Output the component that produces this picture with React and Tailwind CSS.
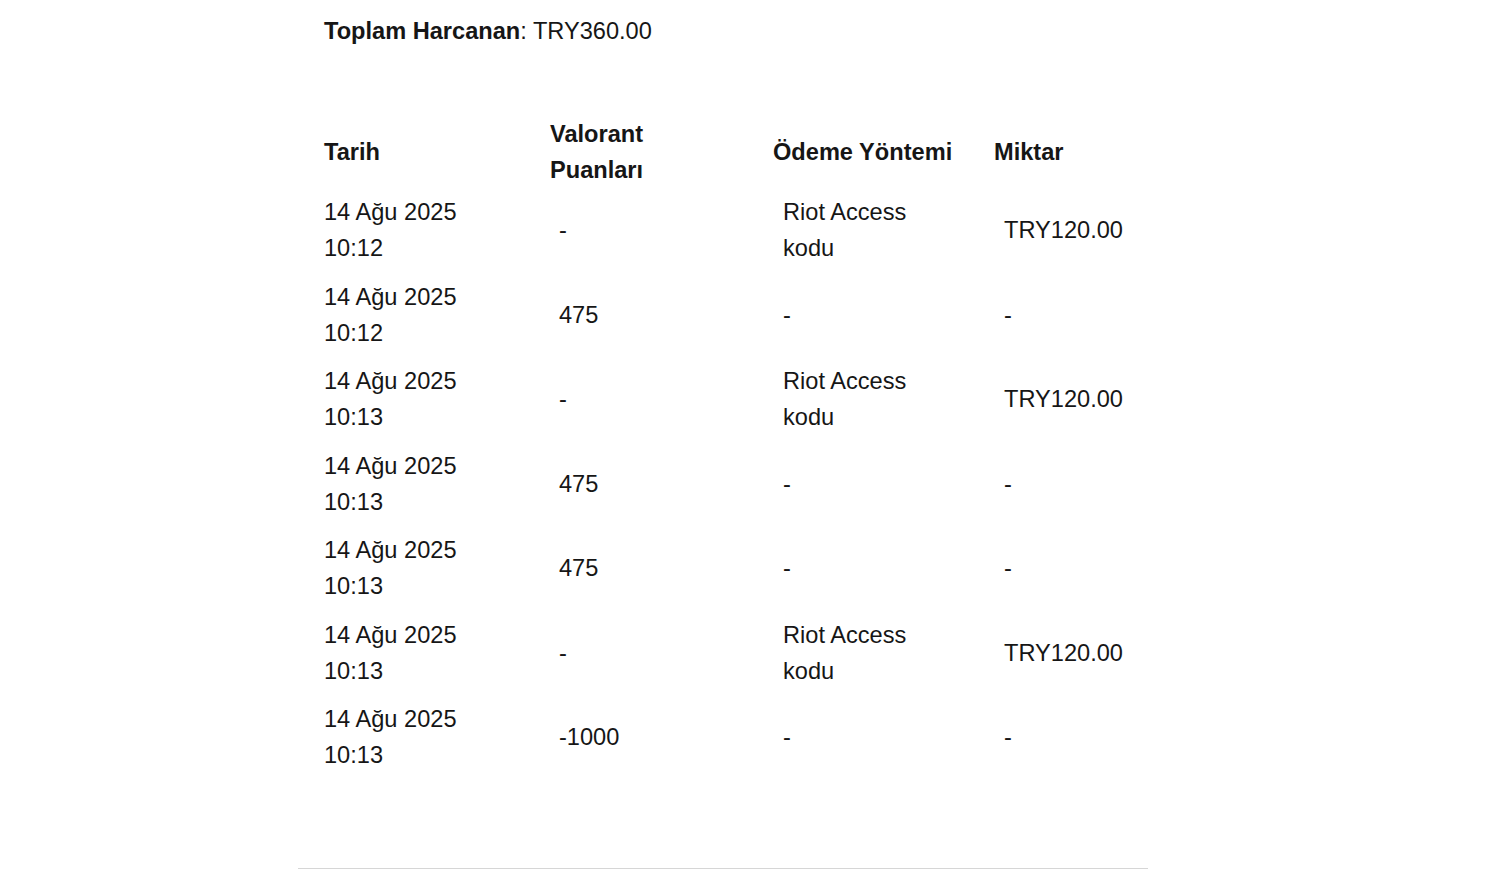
import React from "react";

const rows = [
  { d: "14 Ağu 2025", t: "10:12", vp: "-", pm: "Riot Access kodu", amt: "TRY120.00" },
  { d: "14 Ağu 2025", t: "10:12", vp: "475", pm: "-", amt: "-" },
  { d: "14 Ağu 2025", t: "10:13", vp: "-", pm: "Riot Access kodu", amt: "TRY120.00" },
  { d: "14 Ağu 2025", t: "10:13", vp: "475", pm: "-", amt: "-" },
  { d: "14 Ağu 2025", t: "10:13", vp: "475", pm: "-", amt: "-" },
  { d: "14 Ağu 2025", t: "10:13", vp: "-", pm: "Riot Access kodu", amt: "TRY120.00" },
  { d: "14 Ağu 2025", t: "10:13", vp: "-1000", pm: "-", amt: "-" },
];

export default function App() {
  return (
    <div
      className="min-h-[882px] w-full bg-white text-[#161616]"
      style={{ fontFamily: '"Liberation Sans", Arial, sans-serif' }}
    >
      <div className="ml-[298px] w-[850px]">
        <div className="px-[26px] pt-[13px] text-[23.6px] leading-[36px]">
          <span className="font-bold">Toplam Harcanan</span>: TRY360.00
        </div>

        <div className="mt-[67px] px-[26px] text-[23.6px] leading-[36px]">
          <div className="grid grid-cols-[226px_223px_221px_180px] items-center font-bold">
            <div>Tarih</div>
            <div className="max-w-[120px]">Valorant Puanları</div>
            <div>Ödeme Yöntemi</div>
            <div>Miktar</div>
          </div>
          <div>
            {rows.map((r, i) => (
              <div
                key={i}
                className="grid grid-cols-[226px_223px_221px_180px] items-center py-[6.25px]"
              >
                <div>
                  <div>{r.d}</div>
                  <div>{r.t}</div>
                </div>
                <div className="pl-[9px]">{r.vp}</div>
                <div className="pl-[10px] max-w-[160px]">{r.pm}</div>
                <div className="pl-[10px]">{r.amt}</div>
              </div>
            ))}
          </div>
        </div>

        <div className="mt-[88px] h-px w-full bg-[#d6d6d6]" />
      </div>
    </div>
  );
}
